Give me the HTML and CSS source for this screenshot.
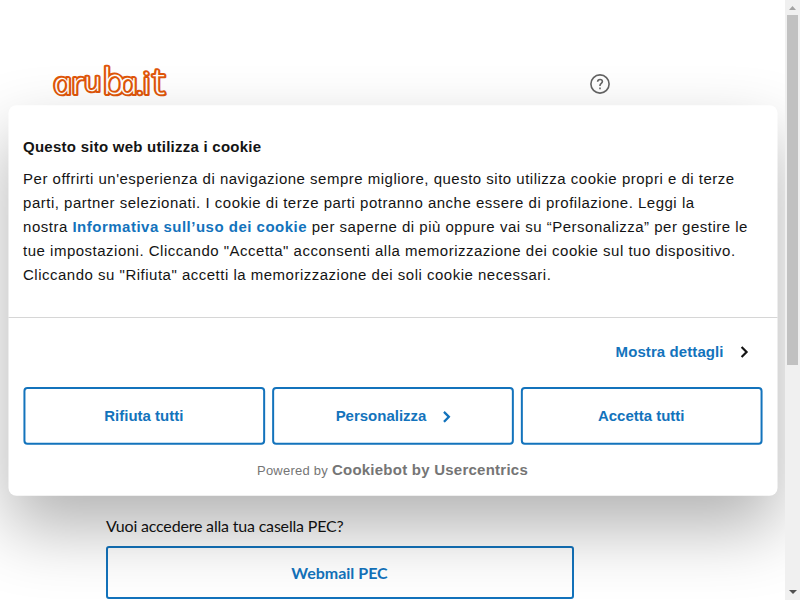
FILE: index.html
```html
<!DOCTYPE html>
<html lang="it">
<head>
<meta charset="utf-8">
<title>Aruba Webmail</title>
<link rel="stylesheet" href="styles.css">
</head>
<body>
<div class="viewport">
  <main class="page">
    <header class="header">
      <svg class="logo" width="116" height="36" viewBox="0 0 116 36" role="img" aria-label="aruba.it">
        <defs>
          <g id="wordmark" transform="translate(2 30.8) scale(1.1 1) skewX(12)">
            <text x="1.2 17.8 29.8 46.4 61 76.2 82.6 91.8" y="0 0 -3 0 0 0 0 0">ar<tspan class="small">u</tspan><tspan class="tall">b</tspan>a.i<tspan class="tall">t</tspan></text>
          </g>
        </defs>
        <use href="#wordmark" class="logo-edge"/>
        <use href="#wordmark" class="logo-core"/>
      </svg>
      <svg class="help" width="20" height="20" viewBox="0 0 20 20" fill="none" stroke="#646464" stroke-width="1.6">
        <circle cx="10" cy="10" r="9.1"/>
        <path d="M7.6 7.8C7.7 6.3 8.6 5.5 10 5.5s2.4.9 2.4 2.1c0 1.7-2.4 1.8-2.4 3.9v.5"/>
        <path d="M10 13.6v1.6"/>
      </svg>
    </header>
    <section class="pec">
      <p class="pec-text">Vuoi accedere alla tua casella PEC?</p>
      <a class="pec-button">Webmail PEC</a>
    </section>
    <div class="dialog">
      <div class="dialog-body">
        <h2>Questo sito web utilizza i cookie</h2>
        <p>Per offrirti un'esperienza di navigazione sempre migliore, questo sito utilizza cookie propri e di terze<br>parti, partner selezionati. I cookie di terze parti potranno anche essere di profilazione. Leggi la<br>nostra <b>Informativa sull’uso dei cookie</b> per saperne di più oppure vai su “Personalizza” per gestire le<br>tue impostazioni. Cliccando "Accetta" acconsenti alla memorizzazione dei cookie sul tuo dispositivo.<br>Cliccando su "Rifiuta" accetti la memorizzazione dei soli cookie necessari.</p>
      </div>
      <div class="dialog-footer">
        <a class="details">Mostra dettagli
          <svg width="8" height="12" viewBox="0 0 8 12"><path d="M1 1l5 5-5 5"/></svg>
        </a>
        <div class="buttons">
          <button>Rifiuta tutti</button>
          <button class="customize">Personalizza
            <svg width="8" height="12" viewBox="0 0 8 12"><path d="M1 1l5 5-5 5"/></svg>
          </button>
          <button>Accetta tutti</button>
        </div>
        <p class="powered">Powered by <b>Cookiebot by Usercentrics</b></p>
      </div>
    </div>
  </main>
  <div class="scrollbar">
    <svg width="7" height="4" viewBox="0 0 7 4"><path d="M0 4L3.5 0 7 4z" fill="#a3a3a3"/></svg>
    <div class="thumb"></div>
    <svg width="8" height="4" viewBox="0 0 8 4"><path d="M0 0h8L4 4z" fill="#505050"/></svg>
  </div>
</div>
</body>
</html>
```
FILE: styles.css
```css
* { box-sizing: border-box; }
body {
  margin: 0;
  color: #141414;
  background: #fff;
  font-family: "Liberation Sans", Arial, sans-serif;
  overflow: hidden;
}
.viewport { display: flex; height: 600px; }
.page {
  position: relative;
  flex: 1;
  display: flex;
  flex-direction: column;
  justify-content: space-between;
  overflow: hidden;
}
.header {
  display: flex;
  justify-content: space-between;
  align-items: center;
  height: 36px;
  margin: 63px 175px 0 52px;
}
.help { margin-top: 6px; }
.logo { overflow: visible; }
.logo text { font: italic 300 30px "Open Sans", sans-serif; }
.logo .small { font-size: 27px; }
.logo .tall { font-size: 36px; }
.logo-edge { fill: #e0560a; stroke: #e0560a; stroke-width: 4px; stroke-linejoin: round; }
.logo-core { fill: #fff; stroke: none; }

.pec {
  width: 468px;
  margin: 0 0 1px 106px;
  font-family: Lato, sans-serif;
  font-size: 16px;
}
.pec-text { margin: 0 0 8px; line-height: 24px; letter-spacing: -0.19px; }
.pec-button {
  display: flex;
  align-items: center;
  justify-content: center;
  height: 53px;
  padding-right: 1px;
  border: 2px solid #1373bc;
  border-radius: 3px;
  color: #1373bc;
  font-weight: 700;
}

.dialog {
  position: absolute;
  left: 8px;
  top: 105px;
  width: 770px;
  height: 390.5px;
  border-radius: 8px;
  background: #fff;
  box-shadow: 0 32px 68px rgba(0, 0, 0, 0.3);
  font-size: 15px;
  transform: scale(0.9988);
}
.dialog-body {
  height: 213px;
  padding: 30px 0 0 14.6px;
  border-bottom: 1px solid #d6d6d6;
  white-space: nowrap;
}
.dialog-body h2 {
  margin: 0 0 8px;
  font-size: 15px;
  line-height: 24px;
  letter-spacing: 0.26px;
}
.dialog-body p {
  margin: 0;
  line-height: 24px;
  letter-spacing: 0.508px;
}
.dialog-body b { color: #1373bc; }
.dialog-footer { padding: 22px 15px 0; }
.details {
  display: flex;
  justify-content: flex-end;
  align-items: center;
  gap: 17px;
  height: 23px;
  padding-right: 14px;
  color: #1373bc;
  font-weight: 700;
  letter-spacing: 0.1px;
}
.dialog svg { fill: none; stroke: #141414; stroke-width: 2.2px; }
.buttons {
  display: grid;
  grid-template-columns: repeat(3, 1fr);
  gap: 7px;
  margin-top: 24px;
}
.buttons button {
  display: flex;
  align-items: center;
  justify-content: center;
  height: 58px;
  padding: 0 1px 1px 0;
  border: 2px solid #1373bc;
  border-radius: 4px;
  background: #fff;
  color: #1373bc;
  font: 700 15px "Liberation Sans", Arial, sans-serif;
}
.buttons .customize { gap: 17px; padding: 0 0 1px 1px; }
.buttons .customize svg { stroke: #1373bc; margin-top: 3px; }
.powered {
  margin: 13px 1px 0 0;
  color: #757575;
  text-align: center;
  font-size: 13px;
  line-height: 24px;
  letter-spacing: 0.25px;
}
.powered b { font-size: 15px; }

.scrollbar {
  display: flex;
  flex-direction: column;
  align-items: center;
  width: 15px;
  padding: 6px 0;
  background: #f0f0f0;
}
.thumb {
  width: 11px;
  height: 350px;
  margin: 5px 0 auto;
  background: #c1c1c1;
}
```
